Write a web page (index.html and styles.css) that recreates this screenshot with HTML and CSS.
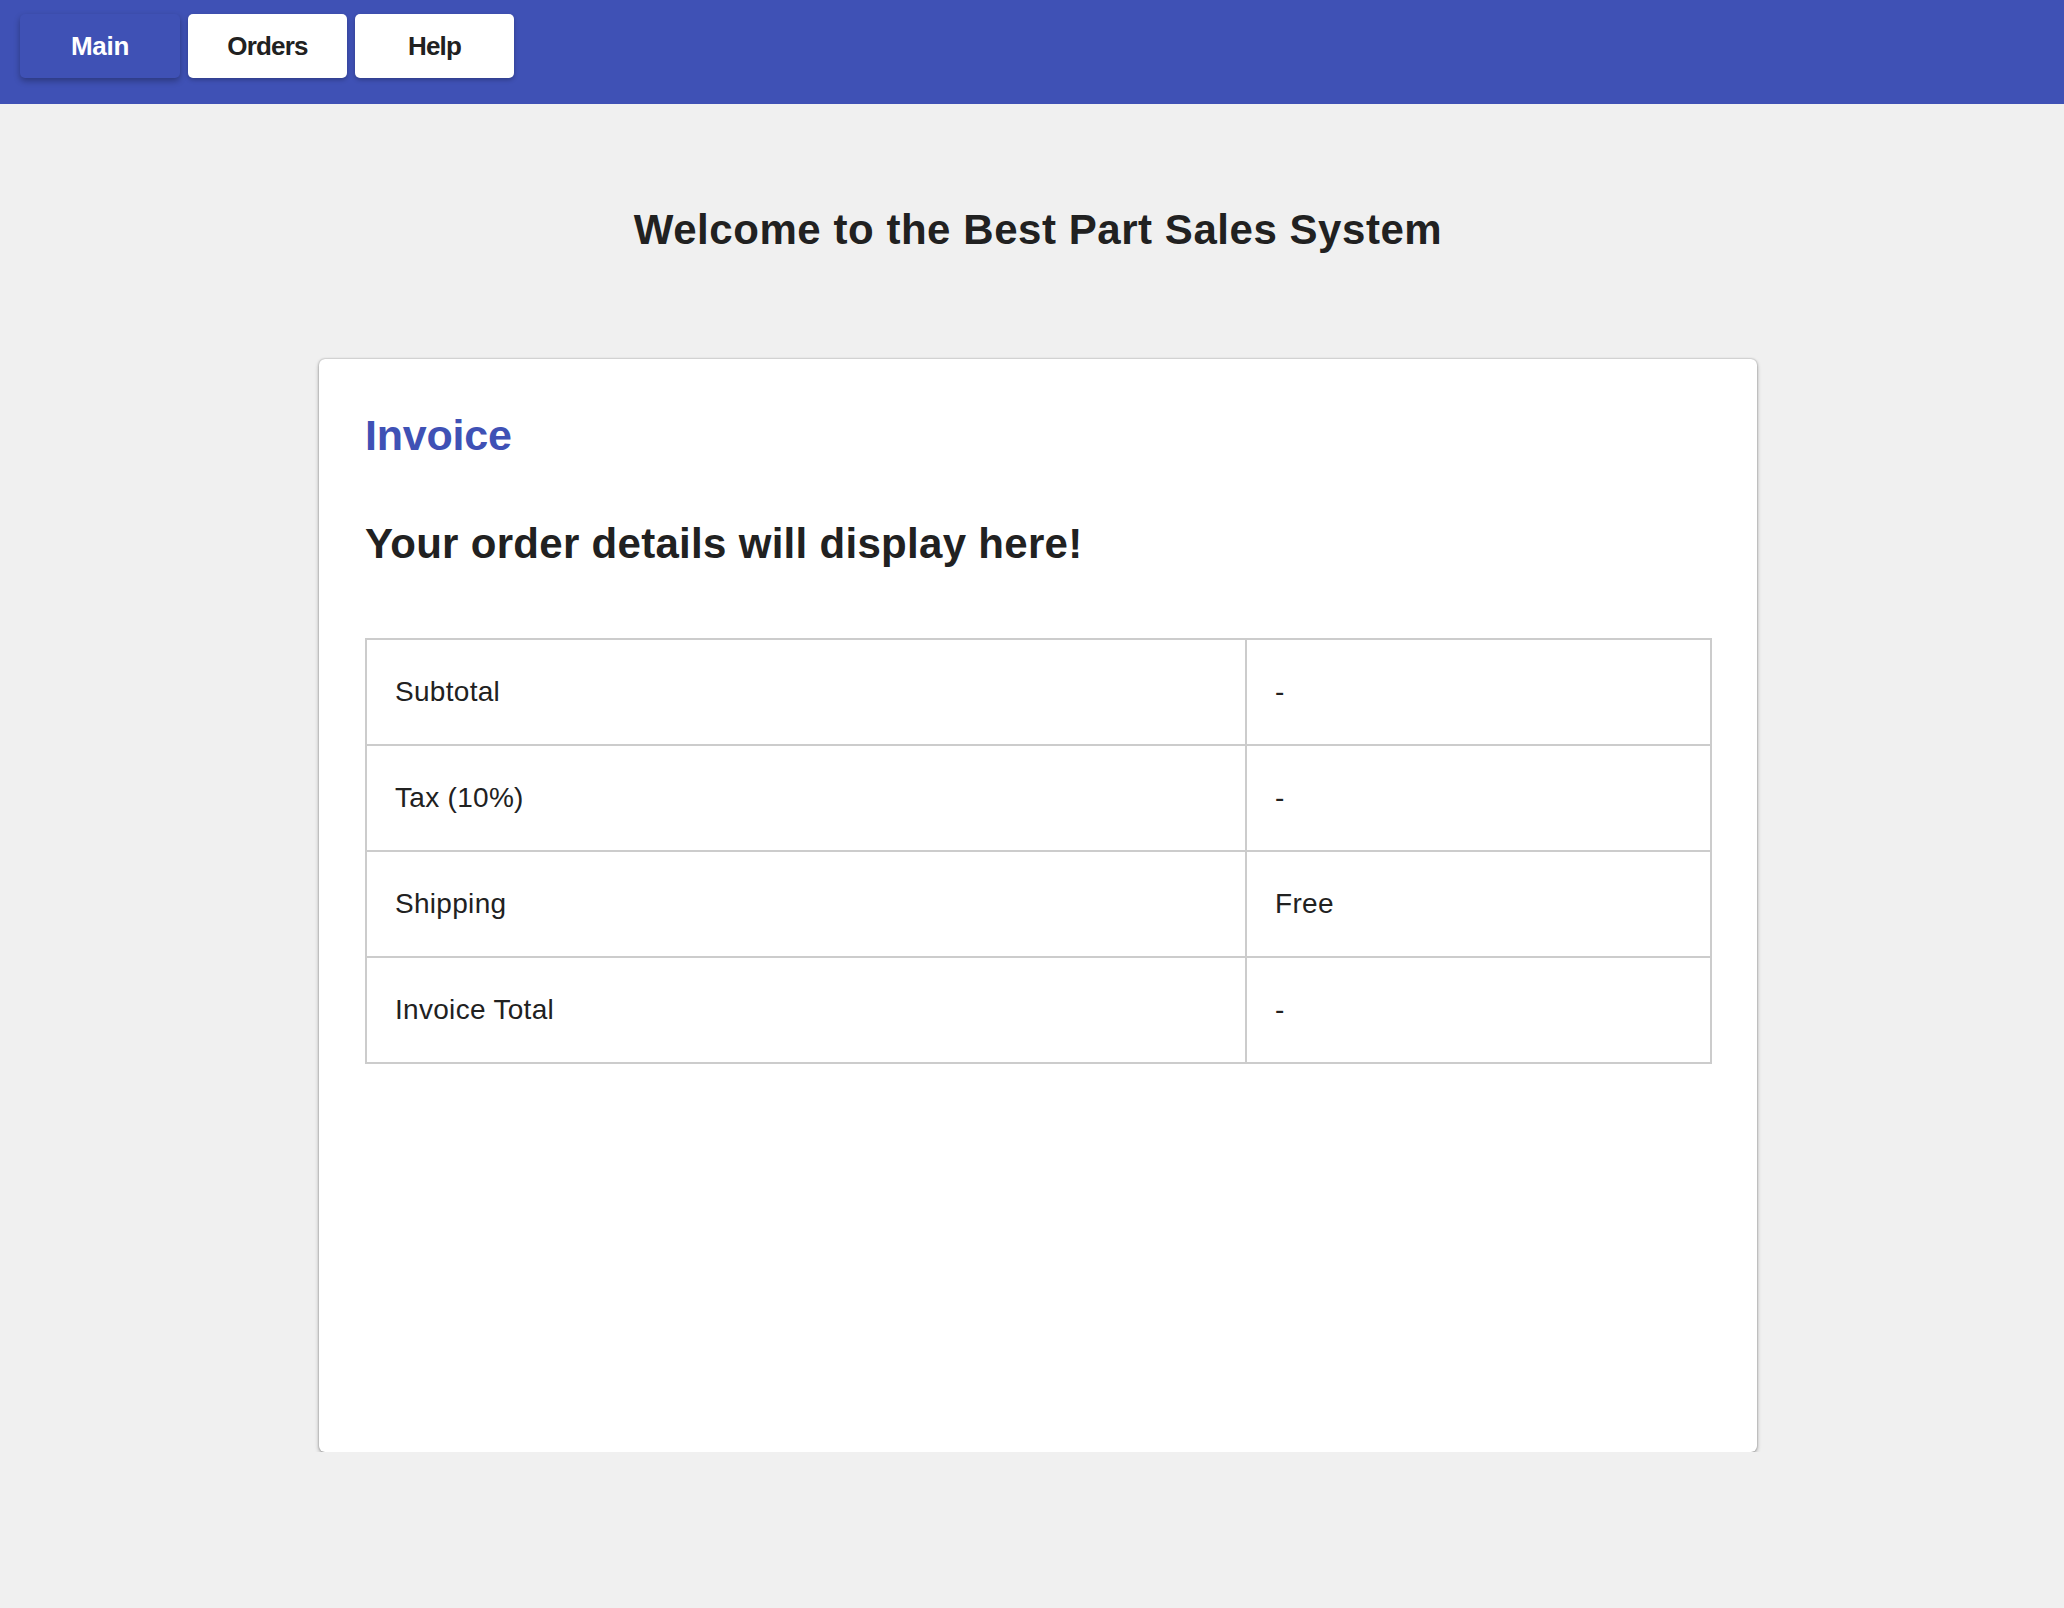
FILE: index.html
```html
<!DOCTYPE html>
<html lang="en">
<head>
<meta charset="utf-8">
<title>Best Part Sales System</title>
<link rel="stylesheet" href="styles.css">
</head>
<body>
<nav class="topbar">
  <button class="nav-btn nav-btn-active">Main</button>
  <button class="nav-btn">Orders</button>
  <button class="nav-btn">Help</button>
</nav>
<main class="page">
  <h1 class="welcome">Welcome to the Best Part Sales System</h1>
  <section class="card">
    <h2 class="card-title">Invoice</h2>
    <h3 class="card-sub">Your order details will display here!</h3>
    <table class="invoice">
      <tr><td class="label">Subtotal</td><td class="value">-</td></tr>
      <tr><td class="label">Tax (10%)</td><td class="value">-</td></tr>
      <tr><td class="label">Shipping</td><td class="value">Free</td></tr>
      <tr><td class="label">Invoice Total</td><td class="value">-</td></tr>
    </table>
  </section>
</main>
</body>
</html>
```

FILE: styles.css
```css
* { box-sizing: border-box; }
html, body {
  margin: 0;
  padding: 0;
  background: #f0f0f0;
  font-family: "Liberation Sans", Arial, sans-serif;
  color: #212121;
}
.topbar {
  height: 104px;
  background: #3f51b5;
  display: flex;
  align-items: flex-start;
  gap: 8px;
  padding: 14px 0 0 20px;
}
.nav-btn {
  width: 159px;
  height: 64px;
  border: none;
  border-radius: 5px;
  background: #ffffff;
  color: #212121;
  font-family: "Liberation Sans", Arial, sans-serif;
  font-size: 26px;
  font-weight: 700;
  letter-spacing: -0.8px;
  box-shadow: 0 2px 4px rgba(0,0,0,0.25);
  cursor: pointer;
  padding: 0;
}
.nav-btn-active {
  width: 160px;
  background: #3f51b5;
  color: #ffffff;
  letter-spacing: -0.3px;
  box-shadow: 0 3px 6px rgba(0,0,0,0.3);
}
.page {
  width: 1438px;
  margin-left: 319px;
  padding-top: 105px;
}
.welcome {
  margin: 0;
  font-size: 42px;
  line-height: 42px;
  font-weight: 700;
  letter-spacing: 0.55px;
  text-align: center;
  color: #212121;
}
.card {
  margin-top: 108px;
  min-height: 1093px;
  background: #ffffff;
  border-radius: 6px;
  box-shadow: 0 0 2px rgba(0,0,0,0.35), 0 2px 4px rgba(0,0,0,0.3);
  padding: 54px 45px 40px 46px;
}
.card-title {
  margin: 0;
  font-size: 43px;
  line-height: 44px;
  font-weight: 700;
  letter-spacing: -0.2px;
  color: #3f51b5;
}
.card-sub {
  margin: 66px 0 0;
  font-size: 42px;
  line-height: 42px;
  font-weight: 700;
  letter-spacing: 0.3px;
  color: #212121;
}
.invoice {
  margin-top: 73px;
  width: 100%;
  border-collapse: collapse;
  font-size: 28px;
  line-height: 48px;
  letter-spacing: 0.3px;
  color: #212121;
}
.invoice td {
  border: 2px solid #cccccc;
  padding: 28px 28px;
}
.invoice .label { width: 880px; }
```
